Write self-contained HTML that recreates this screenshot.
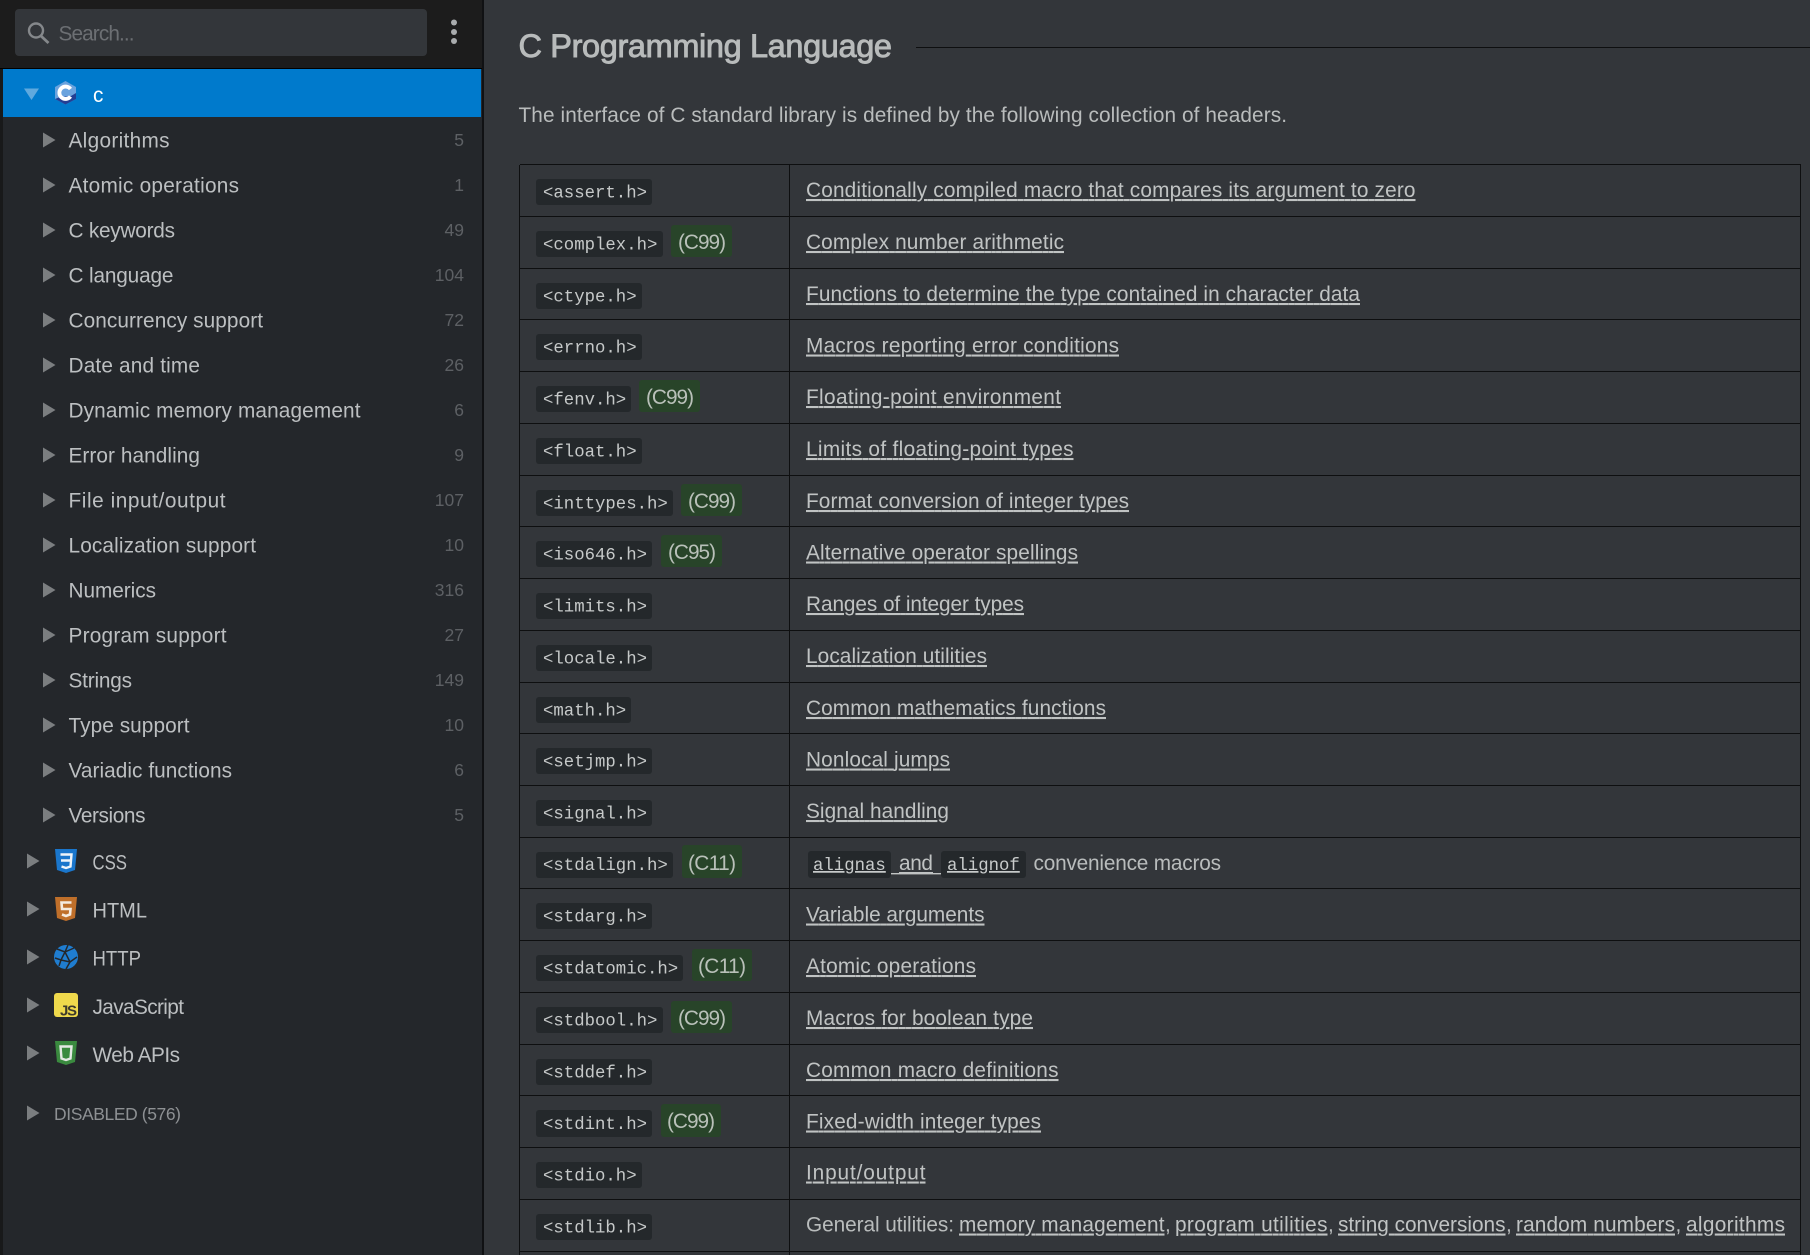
<!DOCTYPE html>
<html lang="en">
<head>
<meta charset="utf-8">
<title>C Programming Language</title>
<style>
html,body{margin:0;padding:0;background:#33363a;width:1810px;height:1255px;overflow:hidden}
svg{display:block}
text{font-family:"Liberation Sans",sans-serif;font-size:20.8px;white-space:pre}
.s{fill:#bcbfc1}
.n{font-size:17.5px;fill:#5d6064;text-anchor:end}
.p{fill:#b9bcbc}
.l{fill:#c0c3c3;text-decoration:underline}
.c{font-family:"Liberation Mono",monospace;font-size:17.33px;fill:#c6c9c9}
.b{fill:#b9c0b9}
.bg{fill:#284429}
.cb{fill:#24282b}
</style>
</head>
<body>
<svg xmlns="http://www.w3.org/2000/svg" width="1810" height="1255" viewBox="0 0 1810 1255">
<defs>
<path id="t" d="M0 -7.5L12.5 0L0 7.5Z" fill="#7b7e80"/>
<path id="sh" d="M0 0H22L20 21L11 24L2 21Z"/>
</defs>
<rect width="1810" height="1255" fill="#33363a"/>

<!-- Sidebar -->
<rect x="0" y="0" width="484" height="1255" fill="#24272b"/>
<rect x="0" y="0" width="3" height="1255" fill="#18191a"/>
<rect x="482" y="0" width="2" height="1255" fill="#101113"/>
<rect x="0" y="0" width="482" height="68" fill="#1c1c1c"/>
<rect x="0" y="68" width="482" height="1" fill="#000"/>
<rect x="15" y="9" width="412" height="47" rx="4" fill="#33363a"/>
<circle cx="36" cy="30.5" r="7" fill="none" stroke="#85888b" stroke-width="2.4"/>
<path d="M41 36L48.5 43" stroke="#85888b" stroke-width="2.8" fill="none"/>
<text x="58.5" y="40.5" textLength="76" fill="#6c6f73">Search...</text>
<circle cx="454" cy="22.5" r="3" fill="#a9acae"/>
<circle cx="454" cy="32" r="3" fill="#a9acae"/>
<circle cx="454" cy="41" r="3" fill="#a9acae"/>

<!-- selected row -->
<rect x="3" y="69" width="478" height="48" fill="#007acc"/>
<path d="M24 88.5H39L31.5 100Z" fill="#5fa9de"/>
<path d="M65.5 81L76 87V99L65.5 104.5L55 99V87Z" fill="#6ba3de"/>
<path d="M76 93V99L65.5 104.5L55 99L60 97L71 96Z" fill="#233f94"/>
<path d="M70.5 89A6.2 6.2 0 1 0 70.5 96.5" fill="none" stroke="#fff" stroke-width="3.8"/>
<text x="93" y="102" fill="#fff" textLength="10">c</text>

<!-- tree children -->
<use href="#t" x="43" y="140"/><use href="#t" x="43" y="185"/><use href="#t" x="43" y="230"/><use href="#t" x="43" y="275"/>
<use href="#t" x="43" y="320"/><use href="#t" x="43" y="365"/><use href="#t" x="43" y="410"/><use href="#t" x="43" y="455"/>
<use href="#t" x="43" y="500"/><use href="#t" x="43" y="545"/><use href="#t" x="43" y="590"/><use href="#t" x="43" y="635"/>
<use href="#t" x="43" y="680"/><use href="#t" x="43" y="725"/><use href="#t" x="43" y="770"/><use href="#t" x="43" y="815"/>

<text class="s" x="68.5" y="147.5" textLength="101">Algorithms</text>
<text class="s" x="68.5" y="192.5" textLength="170.5">Atomic operations</text>
<text class="s" x="68.5" y="237.5" textLength="106.5">C keywords</text>
<text class="s" x="68.5" y="282.5" textLength="105">C language</text>
<text class="s" x="68.5" y="327.5" textLength="194.5">Concurrency support</text>
<text class="s" x="68.5" y="372.5" textLength="131.5">Date and time</text>
<text class="s" x="68.5" y="417.5" textLength="292">Dynamic memory management</text>
<text class="s" x="68.5" y="462.5" textLength="131.5">Error handling</text>
<text class="s" x="68.5" y="507.5" textLength="157">File input/output</text>
<text class="s" x="68.5" y="552.5" textLength="187.5">Localization support</text>
<text class="s" x="68.5" y="597.5" textLength="87.5">Numerics</text>
<text class="s" x="68.5" y="642.5" textLength="158">Program support</text>
<text class="s" x="68.5" y="687.5" textLength="63.5">Strings</text>
<text class="s" x="68.5" y="732.5" textLength="121">Type support</text>
<text class="s" x="68.5" y="777.5" textLength="163.5">Variadic functions</text>
<text class="s" x="68.5" y="822.5" textLength="77">Versions</text>

<text class="n" x="464" y="146">5</text>
<text class="n" x="464" y="191">1</text>
<text class="n" x="464" y="236">49</text>
<text class="n" x="464" y="281">104</text>
<text class="n" x="464" y="326">72</text>
<text class="n" x="464" y="371">26</text>
<text class="n" x="464" y="416">6</text>
<text class="n" x="464" y="461">9</text>
<text class="n" x="464" y="506">107</text>
<text class="n" x="464" y="551">10</text>
<text class="n" x="464" y="596">316</text>
<text class="n" x="464" y="641">27</text>
<text class="n" x="464" y="686">149</text>
<text class="n" x="464" y="731">10</text>
<text class="n" x="464" y="776">6</text>
<text class="n" x="464" y="821">5</text>

<!-- top level -->
<use href="#t" x="27" y="861"/><use href="#t" x="27" y="909"/><use href="#t" x="27" y="957"/><use href="#t" x="27" y="1005"/><use href="#t" x="27" y="1053"/><use href="#t" x="27" y="1113"/>

<use href="#sh" x="55" y="849" fill="#1a76cc"/>
<path d="M60.5 854.5H71.5L70.5 866.5L66 868L61.5 866.5M61 860.5H70.5" fill="none" stroke="#eef4fa" stroke-width="2.4"/>
<text class="s" x="92.5" y="869.5" textLength="34.5" lengthAdjust="spacingAndGlyphs">CSS</text>

<use href="#sh" x="55" y="897" fill="#bf6f2a"/>
<path d="M71.5 902.5H61.5L62 909H70.5L70 914.5L66 916L62 914.5" fill="none" stroke="#f4eadf" stroke-width="2.6"/>
<text class="s" x="92.5" y="917.5" textLength="54.5" lengthAdjust="spacingAndGlyphs">HTML</text>

<circle cx="66" cy="957" r="12" fill="#1f7dd0"/>
<path d="M57 949L65 952L74 948M65 952L61 960L55 958M61 960L70 962L77 957M70 962L66 969M61 960L59 966M65 952L70 962M68 945L65 952" fill="none" stroke="#24272b" stroke-width="1.5"/>
<text class="s" x="92.5" y="965.5" textLength="48.5" lengthAdjust="spacingAndGlyphs">HTTP</text>

<rect x="54" y="993" width="24" height="24" rx="3" fill="#efd94c"/>
<text x="60" y="1015.5" textLength="17" style="font-size:15px;font-weight:bold" fill="#3d3a2c">JS</text>
<text class="s" x="92.5" y="1014" textLength="91.5">JavaScript</text>

<use href="#sh" x="55" y="1041" fill="#3a8a3f"/>
<path d="M60.5 1046.5H71.5L70.5 1058.5L66 1060L61.5 1058.5Z" fill="none" stroke="#e3e8e3" stroke-width="2.4"/>
<text class="s" x="92.5" y="1062" textLength="87.5">Web APIs</text>

<text x="54" y="1120" textLength="127" style="font-size:17.5px" fill="#8d9093">DISABLED (576)</text>

<!-- Main -->
<text x="518.5" y="57" textLength="373.5" style="font-size:32.5px" fill="#b8bbbb" stroke="#b8bbbb" stroke-width="0.9">C Programming Language</text>
<rect x="916" y="47" width="894" height="1" fill="#0e0f10"/>
<text class="p" x="518.5" y="122" textLength="768.5">The interface of C standard library is defined by the following collection of headers.</text>

<!-- table borders -->
<g fill="#0e0f10">
<rect x="520" y="164" width="1281" height="1"/><rect x="520" y="216" width="1281" height="1"/>
<rect x="520" y="268" width="1281" height="1"/><rect x="520" y="319" width="1281" height="1"/>
<rect x="520" y="371" width="1281" height="1"/><rect x="520" y="423" width="1281" height="1"/>
<rect x="520" y="475" width="1281" height="1"/><rect x="520" y="526" width="1281" height="1"/>
<rect x="520" y="578" width="1281" height="1"/><rect x="520" y="630" width="1281" height="1"/>
<rect x="520" y="682" width="1281" height="1"/><rect x="520" y="733" width="1281" height="1"/>
<rect x="520" y="785" width="1281" height="1"/><rect x="520" y="837" width="1281" height="1"/>
<rect x="520" y="888" width="1281" height="1"/><rect x="520" y="940" width="1281" height="1"/>
<rect x="520" y="992" width="1281" height="1"/><rect x="520" y="1044" width="1281" height="1"/>
<rect x="520" y="1095" width="1281" height="1"/><rect x="520" y="1147" width="1281" height="1"/>
<rect x="520" y="1199" width="1281" height="1"/><rect x="520" y="1251" width="1281" height="1"/>
<rect x="519" y="165" width="1" height="1090"/><rect x="789" y="164" width="1" height="1091"/><rect x="1800" y="164" width="1" height="1091"/>
</g>

<g transform="translate(0,164)"><rect class="cb" x="536" y="15" width="116" height="26" rx="3"/><text class="c" x="543" y="33.5">&lt;assert.h&gt;</text><text class="l" x="806" y="33" textLength="609.5">Conditionally compiled macro that compares its argument to zero</text></g>

<g transform="translate(0,216)"><rect class="cb" x="536" y="15" width="127" height="26" rx="3"/><text class="c" x="543" y="33.5">&lt;complex.h&gt;</text><rect class="bg" x="671" y="9" width="61" height="32" rx="3"/><text class="b" x="678" y="33" textLength="48">(C99)</text><text class="l" x="806" y="33" textLength="258">Complex number arithmetic</text></g>

<g transform="translate(0,268)"><rect class="cb" x="536" y="15" width="106" height="26" rx="3"/><text class="c" x="543" y="33.5">&lt;ctype.h&gt;</text><text class="l" x="806" y="33" textLength="554">Functions to determine the type contained in character data</text></g>

<g transform="translate(0,319)"><rect class="cb" x="536" y="15" width="106" height="26" rx="3"/><text class="c" x="543" y="33.5">&lt;errno.h&gt;</text><text class="l" x="806" y="33.5" textLength="313">Macros reporting error conditions</text></g>

<g transform="translate(0,371)"><rect class="cb" x="536" y="15" width="95" height="26" rx="3"/><text class="c" x="543" y="33.5">&lt;fenv.h&gt;</text><rect class="bg" x="639" y="9" width="61" height="32" rx="3"/><text class="b" x="646" y="33" textLength="48">(C99)</text><text class="l" x="806" y="33" textLength="255">Floating-point environment</text></g>

<g transform="translate(0,423)"><rect class="cb" x="536" y="15" width="106" height="26" rx="3"/><text class="c" x="543" y="33.5">&lt;float.h&gt;</text><text class="l" x="806" y="33" textLength="267.5">Limits of floating-point types</text></g>

<g transform="translate(0,475)"><rect class="cb" x="536" y="15" width="137" height="26" rx="3"/><text class="c" x="543" y="33.5">&lt;inttypes.h&gt;</text><rect class="bg" x="681" y="9" width="61" height="32" rx="3"/><text class="b" x="688" y="33" textLength="48">(C99)</text><text class="l" x="806" y="33" textLength="323">Format conversion of integer types</text></g>

<g transform="translate(0,526)"><rect class="cb" x="536" y="15" width="116" height="26" rx="3"/><text class="c" x="543" y="33.5">&lt;iso646.h&gt;</text><rect class="bg" x="661" y="9" width="61" height="32" rx="3"/><text class="b" x="668" y="33" textLength="48">(C95)</text><text class="l" x="806" y="33.5" textLength="272">Alternative operator spellings</text></g>

<g transform="translate(0,578)"><rect class="cb" x="536" y="15" width="116" height="26" rx="3"/><text class="c" x="543" y="33.5">&lt;limits.h&gt;</text><text class="l" x="806" y="33" textLength="218">Ranges of integer types</text></g>

<g transform="translate(0,630)"><rect class="cb" x="536" y="15" width="116" height="26" rx="3"/><text class="c" x="543" y="33.5">&lt;locale.h&gt;</text><text class="l" x="806" y="33" textLength="181">Localization utilities</text></g>

<g transform="translate(0,682)"><rect class="cb" x="536" y="15" width="95" height="26" rx="3"/><text class="c" x="543" y="33.5">&lt;math.h&gt;</text><text class="l" x="806" y="33" textLength="300">Common mathematics functions</text></g>

<g transform="translate(0,733)"><rect class="cb" x="536" y="15" width="116" height="26" rx="3"/><text class="c" x="543" y="33.5">&lt;setjmp.h&gt;</text><text class="l" x="806" y="33.5" textLength="144">Nonlocal jumps</text></g>

<g transform="translate(0,785)"><rect class="cb" x="536" y="15" width="116" height="26" rx="3"/><text class="c" x="543" y="33.5">&lt;signal.h&gt;</text><text class="l" x="806" y="33" textLength="143">Signal handling</text></g>

<g transform="translate(0,837)"><rect class="cb" x="536" y="15" width="137" height="26" rx="3"/><text class="c" x="543" y="33">&lt;stdalign.h&gt;</text><rect class="bg" x="682" y="8" width="60" height="33" rx="3"/><text class="b" x="688" y="33" textLength="48">(C11)</text>
<rect class="cb" x="808" y="14" width="83" height="27" rx="3"/><text class="c" x="813" y="33" style="text-decoration:underline;fill:#c8cbcb">alignas</text>
<text class="l" x="899" y="33" textLength="34">and</text><rect x="891" y="36" width="50" height="1.4" fill="#c0c3c3"/>
<rect class="cb" x="941" y="14" width="85" height="27" rx="3"/><text class="c" x="947" y="33" style="text-decoration:underline;fill:#c8cbcb">alignof</text>
<text class="p" x="1033.5" y="33" textLength="187.5">convenience macros</text></g>

<g transform="translate(0,888)"><rect class="cb" x="536" y="15" width="116" height="26" rx="3"/><text class="c" x="543" y="33.5">&lt;stdarg.h&gt;</text><text class="l" x="806" y="33.5" textLength="178.5">Variable arguments</text></g>

<g transform="translate(0,940)"><rect class="cb" x="536" y="15" width="147" height="26" rx="3"/><text class="c" x="543" y="33.5">&lt;stdatomic.h&gt;</text><rect class="bg" x="692" y="9" width="60" height="32" rx="3"/><text class="b" x="698" y="33" textLength="48">(C11)</text><text class="l" x="806" y="33" textLength="170">Atomic operations</text></g>

<g transform="translate(0,992)"><rect class="cb" x="536" y="15" width="127" height="26" rx="3"/><text class="c" x="543" y="33.5">&lt;stdbool.h&gt;</text><rect class="bg" x="671" y="9" width="61" height="32" rx="3"/><text class="b" x="678" y="33" textLength="48">(C99)</text><text class="l" x="806" y="33" textLength="227">Macros for boolean type</text></g>

<g transform="translate(0,1044)"><rect class="cb" x="536" y="15" width="116" height="26" rx="3"/><text class="c" x="543" y="33.5">&lt;stddef.h&gt;</text><text class="l" x="806" y="33" textLength="252.5">Common macro definitions</text></g>

<g transform="translate(0,1095)"><rect class="cb" x="536" y="15" width="116" height="27" rx="3"/><text class="c" x="543" y="34">&lt;stdint.h&gt;</text><rect class="bg" x="661" y="9" width="60" height="33" rx="3"/><text class="b" x="667" y="33" textLength="48">(C99)</text><text class="l" x="806" y="33.5" textLength="235">Fixed-width integer types</text></g>

<g transform="translate(0,1147)"><rect class="cb" x="536" y="15" width="106" height="26" rx="3"/><text class="c" x="543" y="33.5">&lt;stdio.h&gt;</text><text class="l" x="806" y="32.5" textLength="119.5">Input/output</text></g>

<g transform="translate(0,1199)"><rect class="cb" x="536" y="15" width="116" height="26" rx="3"/><text class="c" x="543" y="33.5">&lt;stdlib.h&gt;</text>
<text class="p" x="806" y="32.5" textLength="148">General utilities:</text>
<text class="l" x="959" y="32.5" textLength="205.5">memory management</text><text class="p" x="1165" y="32.5">,</text>
<text class="l" x="1175" y="32.5" textLength="152.5">program utilities</text><text class="p" x="1328" y="32.5">,</text>
<text class="l" x="1338" y="32.5" textLength="167.5">string conversions</text><text class="p" x="1506" y="32.5">,</text>
<text class="l" x="1516" y="32.5" textLength="159">random numbers</text><text class="p" x="1675.5" y="32.5">,</text>
<text class="l" x="1686" y="32.5" textLength="99">algorithms</text></g>
</svg>
</body>
</html>
